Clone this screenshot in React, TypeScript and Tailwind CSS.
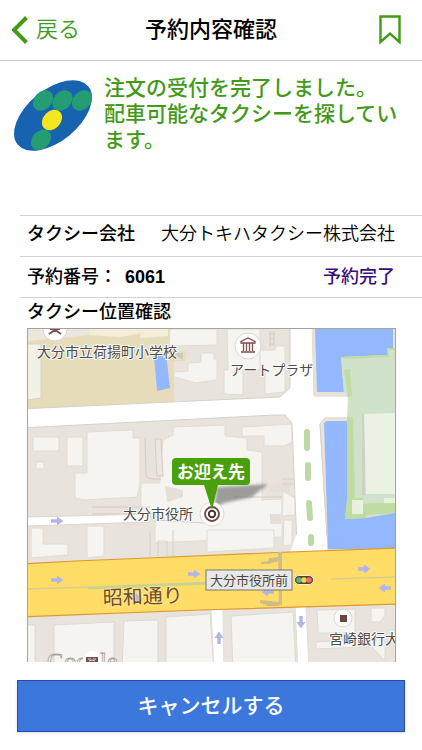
import React from 'react';

const FONT = "font-['Liberation_Sans','Noto_Sans_CJK_JP',sans-serif]";

const reservation = {
  company: '大分トキハタクシー株式会社',
  number: '6061',
  status: '予約完了',
};

const App: React.FC = () => {
  return (
    <div className={`min-h-screen flex flex-col bg-white text-black ${FONT}`}>
      <header className="grid grid-cols-3 items-center h-[61px] px-3 border-b border-[#c8c8c8]">
        <a href="#back" className="flex items-center gap-2 text-[22px] leading-7 font-[350] text-[#429a18]">
          <BackIcon />
          戻る
        </a>
        <h1 className="text-center text-[22px] leading-7 font-medium whitespace-nowrap">予約内容確認</h1>
        <button type="button" aria-label="ブックマーク" className="justify-self-end mr-2">
          <BookmarkIcon />
        </button>
      </header>

      <main className="flex-1 flex flex-col">
        <section className="flex items-start gap-3 h-[154px] px-3 pt-[14px]">
          <CompanyLogo />
          <p className="flex-1 text-[21px] leading-[26px] font-medium text-[#429a18]">
            注文の受付を完了しました。
            <br />
            配車可能なタクシーを探しています。
          </p>
        </section>

        <dl className="ml-5 text-[18px] leading-6">
          <div className="flex items-center justify-between h-[41px] pl-[7px] pr-[27px] pb-1 border-t border-[#d2d2d2]">
            <dt className="font-medium">タクシー会社</dt>
            <dd className="font-[350]">{reservation.company}</dd>
          </div>
          <div className="flex items-center h-[41px] pl-[7px] pr-[27px] border-t border-[#d2d2d2]">
            <dt className="font-medium">予約番号：</dt>
            <dd className="pl-2 font-bold">{reservation.number}</dd>
            <dd className="ml-auto font-medium text-[#37107c]">{reservation.status}</dd>
          </div>
        </dl>

        <section className="flex-1 flex flex-col ml-5 pl-[7px] border-t border-[#d2d2d2]">
          <h2 className="h-[30px] text-[18px] leading-7 font-medium">タクシー位置確認</h2>
          <div className="relative flex-1 min-h-80 mr-[26px] overflow-hidden border border-b-0 border-[#a3a3a3]">
            <PickupMap />
          </div>
        </section>
      </main>

      <footer className="px-[17px] pt-[18px] pb-[18px]">
        <button
          type="button"
          className="w-full h-[52px] border border-[#2c48ae] bg-[#3c78db] text-white text-[21px] leading-7 font-medium shadow-sm"
        >
          キャンセルする
        </button>
      </footer>
    </div>
  );
};

const BackIcon: React.FC = () => (
  <svg width="16" height="28" viewBox="0 0 16 28" fill="none" aria-hidden="true">
    <path d="M14.5 1.5 2 14l12.5 12.5" stroke="#429a18" strokeWidth="4" />
  </svg>
);

const BookmarkIcon: React.FC = () => (
  <svg width="24" height="30" viewBox="0 0 24 30" fill="none" aria-hidden="true">
    <path d="M2.500 1.500h19V27L12 18.500 2.500 27z" stroke="#429a18" strokeWidth="2.4" />
  </svg>
);

const CompanyLogo: React.FC = () => (
  <svg width="80" height="84" viewBox="12 75 80 84" className="shrink-0 overflow-visible" aria-hidden="true">
    <ellipse cx="53" cy="115.5" rx="45.8" ry="25.8" transform="rotate(-39.4 53 115.5)" fill="#1763b0" />
    <g fill="#259d74">
      <ellipse cx="43" cy="100.5" rx="11.4" ry="8.8" transform="rotate(-47 43 100.5)" />
      <ellipse cx="62.5" cy="100.5" rx="11.4" ry="8.8" transform="rotate(-47 62.5 100.5)" />
      <ellipse cx="82" cy="100.5" rx="11.4" ry="8.8" transform="rotate(-47 82 100.5)" />
      <ellipse cx="41" cy="139.8" rx="11.4" ry="8.8" transform="rotate(-47 41 139.8)" />
    </g>
    <ellipse cx="52" cy="120" rx="11.4" ry="8.8" transform="rotate(-47 52 120)" fill="#f3e71f" />
  </svg>
);

// one-way street arrow, centred on x/y
const Arrow: React.FC<{ x: number; y: number; dir?: number }> = ({ x, y, dir = 0 }) => (
  <path
    d="M-6-1.7H0V-4.5L6.5 0 0 4.500V1.7H-6z"
    fill="#b3b4e8"
    transform={`translate(${x} ${y}) rotate(${dir})`}
  />
);

const PickupMap: React.FC = () => (
  <svg
    viewBox="28 329 367 333"
    preserveAspectRatio="xMidYMin slice"
    className="absolute inset-0 size-full"
    role="img"
    aria-label="お迎え先の地図"
  >
    <defs>
      <filter id="pinShadow" x="-20%" y="-40%" width="140%" height="180%">
        <feGaussianBlur stdDeviation="1.5" />
      </filter>
    </defs>

    <rect x="20" y="320" width="390" height="350" fill="#e8e3dc" />

    {/* school grounds */}
    <path d="M27 329H174V402L27 409z" fill="#e6dcba" />
    <path d="M27 329H160L100 334 27 341z" fill="#ece7dd" />
    <path d="M27 344H41V398L27 400z" fill="#f3f1e5" stroke="#d9d4c2" strokeWidth="1" />
    <path d="M89 329H142V333L120 337 89 335zM142 329H168V336L140 338z" fill="#f2eeda" />
    <path d="M154 356 166 353 170 388 157 391zM176 353H183V359L178 358z" fill="#94b8fd" />
    <path d="M170 351H187L185 361H171z" fill="#e9d9a4" opacity=".6" />

    {/* buildings north of the main street */}
    <g fill="#f5f4f0" stroke="#e0dcd5" strokeWidth="1">
      <path d="M170 329H217V345L169 346z" />
      <path d="M188 363 201 362V353H214V359H217V380L196 383 185 380 174 377V372L188 371z" />
      <path d="M227 329H260V370L243 370V395L224 394V370H228z" />
      <path d="M260 350 275 350 276 346H285V392L265 394V370H260z" />
    </g>
    <path d="M270 331V346M274 331V346M270 334H274M270 339H274M270 344H274" stroke="#d0c9bf" strokeWidth="1" />

    {/* city hall block */}
    <g fill="#f5f4f0" stroke="#e0dcd5" strokeWidth="1">
      <path d="M33 437H59V451H33z" />
      <path d="M36 462H44V469H36z" />
      <path d="M67 437H83V466H67z" />
      <path d="M87 432 133 430V438H140V485L137 497 84 500 75 498V473H87z" />
      <path d="M141 483H160V473L163 440 173 435V427L225 425V436L247 438V450L262 452V500L282 499V537L155 543V513H141z" />
      <path d="M242 427 292 424V442L285 446H264V436H242z" />
      <path d="M283 491 295 498V515L282 516z" />
      <path d="M284 520H292V545L283 546z" />
    </g>
    <path d="M92 507H150M92 514H150M145 438 146 475Q147 479 152 479H161" stroke="#d6cac3" fill="none" />
    <path d="M155 439 157 476H163L161 439z" fill="#ebe6df" stroke="#d6cec5" />
    <path d="M165 486 183 490V497L167 502zM232 461H250V478H232zM270 485 290 480V492H270zM270 514H281V524H270zM250 543 265 542V551H250z" fill="#e5dfd8" />
    <path d="M282 479H295M282 484H295M155 520 206 523M234 497H282" stroke="#d5cec7" />

    {/* blocks south of the side street */}
    <g fill="#f5f4f0" stroke="#e0dcd5" strokeWidth="1">
      <path d="M31 528H43V544H68V555L31 558z" />
      <path d="M87 526H104V556L87 558z" />
      <path d="M207 530H274V548L207 552z" />
    </g>

    {/* white streets */}
    <path
      d="M20 409 280 397 290 388V320H312L314 396H348V418H325L320 424 328 552H290L297 546 292 423 285 415H275L20 428z"
      fill="#fff"
      stroke="#d6d2ca"
      strokeWidth="1"
    />
    <path d="M27 517 150 514V522L27 526z" fill="#fff" stroke="#dad5cf" strokeWidth="1" />
    <path d="M290 553 330 551V535H296z" fill="#fff" />

    {/* castle moat and park */}
    <path d="M312 329H395V420H348V396H314z" fill="#e8e1da" />
    <path d="M314 397H349V418H314z" fill="#fff" />
    <path d="M315 329H393V349L387 355 341 358 344 392H317z" fill="#94b8fd" />
    <path d="M320 424 325 418H350V550H328z" fill="#eae4dc" stroke="#d7d1c8" />
    <path d="M324 423 327 421H350V500H395V549H328z" fill="#94b8fd" />
    <path d="M341 357 387 355V348H395V513L366 518 345 519 347 500V420L348 396 344 392z" fill="#d0e2c9" />
    <path d="M341 357 387 355V348H395V350H389V357L343 359zM344 370 350 369 352 396 348 398zM347 417H353L355 498H363V504L395 502V513L366 515V518L345 519 347 500z" fill="#c1dca3" />
    <path d="M362 414H365V495H362z" fill="#c9d5c3" />
    <path d="M364 414 395 413V494H366z" fill="#ebf2e4" />
    <path d="M352 500H363V514H352zM384 498H395V503H384z" fill="#e8f1dc" />

    {/* median trees */}
    <g stroke="#bcd9a5" strokeWidth="6" strokeLinecap="round">
      <path d="M307 432V448M308 465V478M309 503 310 518M311 537V543" />
    </g>

    {/* lower blocks */}
    <path d="M20 617 410 603V670H20z" fill="#e8e3dc" />
    <g fill="#f5f4f0" stroke="#dfdad3" strokeWidth="1">
      <path d="M27 625H35V670H27z" />
      <path d="M54 625 114 622V670H54z" />
      <path d="M124 621 158 620V670H122z" />
      <path d="M166 617 210 614 214 670H166z" />
      <path d="M231 616 293 612 296 670H233z" />
      <path d="M317 610 355 609V633H318z" />
      <path d="M371 608H385V616L380 622H371z" />
      <path d="M316 642 382 638V646L316 649z" />
      <path d="M366 640 385 633V661z" />
    </g>
    <path d="M211 609H223L224 670H214zM295 606H306L309 670H298z" fill="#fff" stroke="#e1ddd7" strokeWidth="1" />

    {/* showa-dori */}
    <path d="M20 564 75 561 148 558 290 552 400 548V604L200 610 20 617z" fill="#ffdd66" />
    <path d="M20 564 75 561 148 558 290 552 400 548M20 617 200 610 400 604" stroke="#df9733" strokeWidth="1.2" fill="none" />
    <path d="M27 589 90 587M331 579 395 577" stroke="#dccb94" strokeWidth="1.5" />
    <path d="M88 588 210 583" stroke="#c5d490" strokeWidth="3" />

    {/* footbridges */}
    <path d="M278 552H282V605H279z" fill="#cfbc8a" />
    <path d="M261 562 268 561 269 558 279 557V561L268 564H261zM260 600 279 602V606L268 606 260 603z" fill="#cfbc8a" />
    <path d="M150 532V558M173 530V556M158 541H167V556M158 541V556" stroke="#d9d2ca" strokeWidth="1" fill="none" />

    <Arrow x={57} y={521} />
    <Arrow x={57} y={580} />
    <Arrow x={194} y={574} />
    <Arrow x={364} y={569} />
    <Arrow x={385} y={588} dir={180} />
    <Arrow x={268} y={592} dir={180} />
    <Arrow x={136} y={598} />
    <Arrow x={219} y={638} dir={-90} />
    <Arrow x={301} y={622} dir={90} />

    {/* place markers */}
    <circle cx="55" cy="329" r="12" fill="#fff" stroke="#d8d4cd" />
    <path d="M49 334 55 330 61 334M50 329H60" stroke="#7a4f4c" strokeWidth="2" fill="none" />
    <circle cx="248" cy="346" r="13" fill="#fff" stroke="#dad6d0" />
    <path
      d="M241 343V341.500L248 338 255 341.500V343zM243.500 343V351M246.500 343V351M249.500 343V351M252.500 343V351M241 352H255"
      stroke="#79504c"
      strokeWidth="1.3"
      fill="none"
    />
    <circle cx="343" cy="618" r="9" fill="#fff" stroke="#dad6d0" />
    <path d="M340 615H347V622H340z" fill="#6b4743" />

    {/* traffic signal */}
    <rect x="294.500" y="575.500" width="19" height="9" rx="4.500" fill="#4d4438" stroke="#f6edd0" />
    <circle cx="299" cy="580" r="2.800" fill="#5fb071" />
    <circle cx="304" cy="580" r="2.800" fill="#f5d348" />
    <circle cx="309" cy="580" r="2.800" fill="#ee6d67" />

    <g fill="#4f4b49" stroke="#fff" strokeWidth="2" strokeOpacity=".8" paintOrder="stroke" fontSize="14">
      <text x="37" y="357">大分市立荷揚町小学校</text>
      <text x="230" y="375">アートプラザ</text>
      <text x="123" y="519">大分市役所</text>
      <text x="329" y="644">宮崎銀行大</text>
      <text x="103" y="605" fontSize="20" fill="#704e24" stroke="#ffe9a2" transform="rotate(-2 103 605)">
        昭和通り
      </text>
    </g>

    <rect x="206" y="570" width="86" height="20" fill="#e8e8e8" stroke="#777" />
    <text x="210" y="585" fontSize="13" fill="#484848">大分市役所前</text>

    <text x="47" y="669" fontSize="24" fill="#fff" fillOpacity=".5" stroke="#a5a29e" strokeWidth=".8" className="font-['Liberation_Serif',serif]">
      Google
    </text>
    <circle cx="92" cy="660" r="9" fill="#fff" />
    <path d="M86 657H98V662H86z" fill="#71504d" />
    <path d="M88 659H91M93 659H96M89 661 92 660 95 661" stroke="#fff" strokeWidth=".8" fill="none" />

    {/* pickup pin */}
    <path d="M214 508 217 487 268 484 252 497 224 503z" fill="#555" opacity=".55" filter="url(#pinShadow)" />
    <circle cx="212" cy="514" r="12" fill="#fff" stroke="#ddd9d4" />
    <circle cx="212" cy="514" r="7" fill="none" stroke="#6a4844" strokeWidth="1.8" />
    <circle cx="212" cy="514" r="3.200" fill="#fff" stroke="#4d3532" strokeWidth="2" />
    <path
      d="M176 458H246Q250 458 250 462V481Q250 485 246 485H218L212 510 204 485H176Q172 485 172 481V462Q172 458 176 458z"
      fill="#4aa00c"
    />
    <text x="177" y="478" fontSize="17" fontWeight="700" fill="#fff">お迎え先</text>
  </svg>
);

export default App;
